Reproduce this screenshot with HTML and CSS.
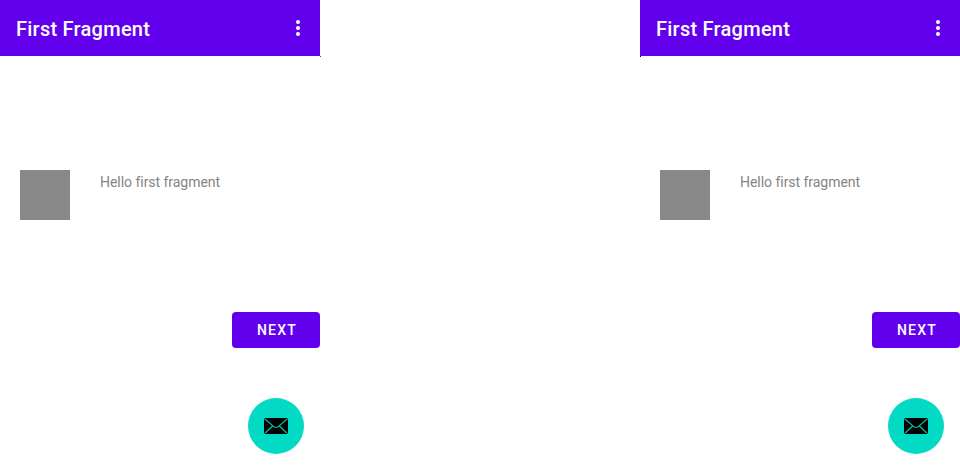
FILE: index.html
```html
<!DOCTYPE html>
<html lang="en">
<head>
<meta charset="utf-8">
<title>First Fragment</title>
<link rel="stylesheet" href="styles.css">
</head>
<body>
<main class="screens">
  <section class="screen">
    <header class="toolbar">
      <h1 class="title">First Fragment</h1>
      <svg class="more" viewBox="0 0 24 24" fill="#fff"><circle cx="12" cy="6" r="2"/><circle cx="12" cy="12" r="2"/><circle cx="12" cy="18" r="2"/></svg>
    </header>
    <div class="item"><div class="thumb"></div><p class="label">Hello first fragment</p></div>
    <button class="next">NEXT</button>
    <button class="fab">
      <svg class="mail" viewBox="0 0 24 16"><rect width="24" height="16" rx="1.8"/><path class="fold" d="M.8 1l8.7 7.4q2.5 2.2 5 0L23.2 1M1.2 15l7.3-7M22.8 15l-7.3-7"/></svg>
    </button>
  </section>
  <section class="screen"><i class="marker red"></i></section>
  <section class="screen">
    <i class="marker black"></i>
    <header class="toolbar">
      <h1 class="title">First Fragment</h1>
      <svg class="more" viewBox="0 0 24 24" fill="#fff"><circle cx="12" cy="6" r="2"/><circle cx="12" cy="12" r="2"/><circle cx="12" cy="18" r="2"/></svg>
    </header>
    <div class="item"><div class="thumb"></div><p class="label">Hello first fragment</p></div>
    <button class="next">NEXT</button>
    <button class="fab">
      <svg class="mail" viewBox="0 0 24 16"><rect width="24" height="16" rx="1.8"/><path class="fold" d="M.8 1l8.7 7.4q2.5 2.2 5 0L23.2 1M1.2 15l7.3-7M22.8 15l-7.3-7"/></svg>
    </button>
  </section>
</main>
</body>
</html>
```
FILE: styles.css
```css
* { box-sizing: border-box; }
body {
  margin: 0;
  background: #fff;
  font-family: Roboto, sans-serif;
}
.screens {
  display: grid;
  grid-template-columns: repeat(3, 320px);
  height: 470px;
}
.screen {
  position: relative;
  display: flex;
  flex-direction: column;
}
.toolbar {
  display: flex;
  align-items: center;
  justify-content: space-between;
  height: 56px;
  padding: 0 10px 0 16px;
  background: #6200ee;
}
.title {
  margin: 2px 0 0;
  color: #fff;
  font-size: 20px;
  font-weight: 500;
  line-height: 24px;
  letter-spacing: 0.25px;
}
.more {
  width: 24px;
  height: 24px;
}
.item {
  display: flex;
  gap: 30px;
  margin: 114px 20px 0;
}
.thumb {
  width: 50px;
  height: 50px;
  background: #888;
}
.label {
  margin: 3px 0 0;
  color: #848484;
  font-size: 14px;
  line-height: 19px;
  letter-spacing: -0.04px;
}
.next {
  align-self: flex-end;
  width: 88px;
  height: 36px;
  margin-top: 92px;
  padding: 0 0 1px 2px;
  border: 0;
  border-radius: 4px;
  background: #6200ee;
  color: #fff;
  font: 500 14px/20px Roboto, sans-serif;
  letter-spacing: 1.25px;
}
.fab {
  display: flex;
  align-items: center;
  justify-content: center;
  align-self: flex-end;
  width: 56px;
  height: 56px;
  margin: 50px 16px 0 0;
  padding: 0;
  border: 0;
  border-radius: 50%;
  background: #03dac5;
}
.mail {
  width: 24px;
  height: 16px;
}
.fold {
  fill: none;
  stroke: #03c4b1;
  stroke-width: 1.15;
}
.marker {
  position: absolute;
  top: 56px;
  left: 0;
  width: 1px;
  height: 1px;
}
.red { background: #f00; }
.black { background: #000; }
```
